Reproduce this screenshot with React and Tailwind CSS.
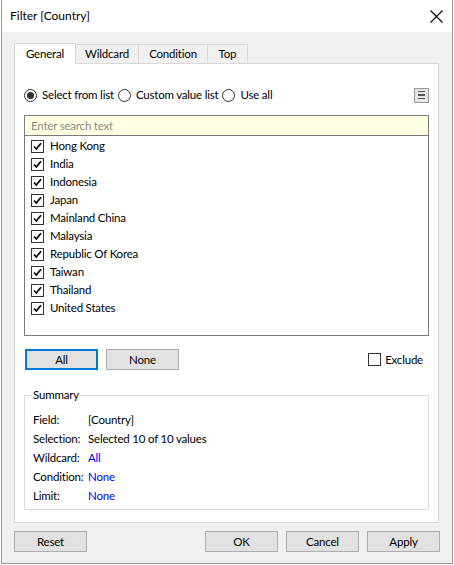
const countries = [
  'Hong Kong',
  'India',
  'Indonesia',
  'Japan',
  'Mainland China',
  'Malaysia',
  'Republic Of Korea',
  'Taiwan',
  'Thailand',
  'United States',
];

const summary = [
  ['Field:', '[Country]', false],
  ['Selection:', 'Selected 10 of 10 values', false],
  ['Wildcard:', 'All', true],
  ['Condition:', 'None', true],
  ['Limit:', 'None', true],
];

function Radio({ checked, children }) {
  return (
    <label className="flex items-center gap-[5px]">
      <span className="w-[13px] h-[13px] rounded-full border border-[#333] bg-white flex items-center justify-center">
        {checked && <span className="w-[7px] h-[7px] rounded-full bg-[#333]" />}
      </span>
      <span>{children}</span>
    </label>
  );
}

function Check({ checked }) {
  return (
    <span className="w-[13px] h-[13px] border border-[#333] bg-white flex items-center justify-center shrink-0">
      {checked && (
        <svg width="11" height="11" viewBox="0 0 11 11">
          <path d="M2 5.5 L4.3 8 L9 2.2" fill="none" stroke="#000" strokeWidth="1.7" />
        </svg>
      )}
    </span>
  );
}

function Button({ children, focused, className = '' }) {
  return (
    <button
      className={`${className} w-[73px] h-[21px] bg-[#e1e1e1] flex items-center justify-center ${
        focused ? 'border-2 border-[#0078d7]' : 'border border-[#adadad]'
      }`}
    >
      {children}
    </button>
  );
}

function Tab({ children, active, className = '' }) {
  if (active) {
    return (
      <div className={`${className} h-[21px] pb-[1px] bg-white border border-b-0 border-[#d9d9d9] flex items-center justify-center relative z-10 -mb-[1px]`}>
        {children}
      </div>
    );
  }
  return (
    <div className={`${className} h-[19px] border border-b-0 border-l-0 border-[#d9d9d9] bg-[#f0f0f0] flex items-center justify-center`}>
      {children}
    </div>
  );
}

export default function App() {
  return (
    <div className="w-[454px] h-[565px] bg-white text-[11.5px] tracking-[-0.2px] leading-[16px] text-black" style={{ fontFamily: 'Lato, "Noto Sans", sans-serif' }}>
      <div className="ml-[1px] w-[452px] h-[564px] border border-t-0 border-[#9a9a9a] bg-[#f0f0f0] flex flex-col">
        <div className="h-[32px] bg-white flex items-center justify-between pl-[8px] pr-[9px] shrink-0">
          <span className="text-[12px] tracking-normal">Filter [Country]</span>
          <svg width="13" height="13" viewBox="0 0 13 13">
            <path d="M0.5 0.5 L12.5 12.5 M12.5 0.5 L0.5 12.5" stroke="#000" strokeWidth="1.1" />
          </svg>
        </div>

        <div className="pl-[12px] pt-[11px]">
          <div className="flex items-end">
            <Tab active className="w-[62px]">General</Tab>
            <Tab className="w-[63px]">Wildcard</Tab>
            <Tab className="w-[69px]">Condition</Tab>
            <Tab className="w-[40px]">Top</Tab>
          </div>

          <div className="w-[425px] h-[460px] bg-white border border-[#d9d9d9] px-[9px] flex flex-col">
            <div className="mt-[23px] flex items-center justify-between">
              <div className="flex items-center gap-[4px]">
                <Radio checked>Select from list</Radio>
                <Radio>Custom value list</Radio>
                <Radio>Use all</Radio>
              </div>
              <div className="w-[15px] h-[15px] border border-[#999] bg-[#e6e6e6] flex flex-col items-center justify-center gap-[2px]">
                <span className="w-[7px] h-[1.5px] bg-[#555]" />
                <span className="w-[7px] h-[1.5px] bg-[#555]" />
                <span className="w-[7px] h-[1.5px] bg-[#555]" />
              </div>
            </div>

            <div className="mt-[12px] border border-[#7a7a7a]">
              <div className="h-[20px] bg-[#ffffe1] border-b border-[#7a7a7a] flex items-center pl-[6px] text-[#8a8a8a]">
                Enter search text
              </div>
              <div className="h-[199px] pl-[6px] pt-[1px]">
                {countries.map((c) => (
                  <div key={c} className="h-[18px] flex items-center gap-[6px]">
                    <Check checked />
                    <span>{c}</span>
                  </div>
                ))}
              </div>
            </div>

            <div className="mt-[13px] flex items-center">
              <Button focused className="ml-[1px]">All</Button>
              <Button className="ml-[8px]">None</Button>
              <label className="ml-auto mr-[6px] flex items-center gap-[4px]">
                <Check />
                <span>Exclude</span>
              </label>
            </div>

            <fieldset className="mt-[17px] border border-[#dcdcdc] px-[8px] pb-[4px]">
              <legend className="ml-[-1px] px-[1px]">Summary</legend>
              <div className="mt-[7px] flex flex-col">
                {summary.map(([label, value, blue]) => (
                  <div key={label} className="h-[19px] flex items-center">
                    <span className="w-[55px] shrink-0">{label}</span>
                    <span className={blue ? 'text-[#0000ff]' : ''}>{value}</span>
                  </div>
                ))}
              </div>
            </fieldset>
          </div>
        </div>

        <div className="mt-[8px] pl-[12px] flex">
          <Button>Reset</Button>
          <Button className="ml-[118px]">OK</Button>
          <Button className="ml-[8px]">Cancel</Button>
          <Button className="ml-[8px]">Apply</Button>
        </div>
      </div>
    </div>
  );
}
